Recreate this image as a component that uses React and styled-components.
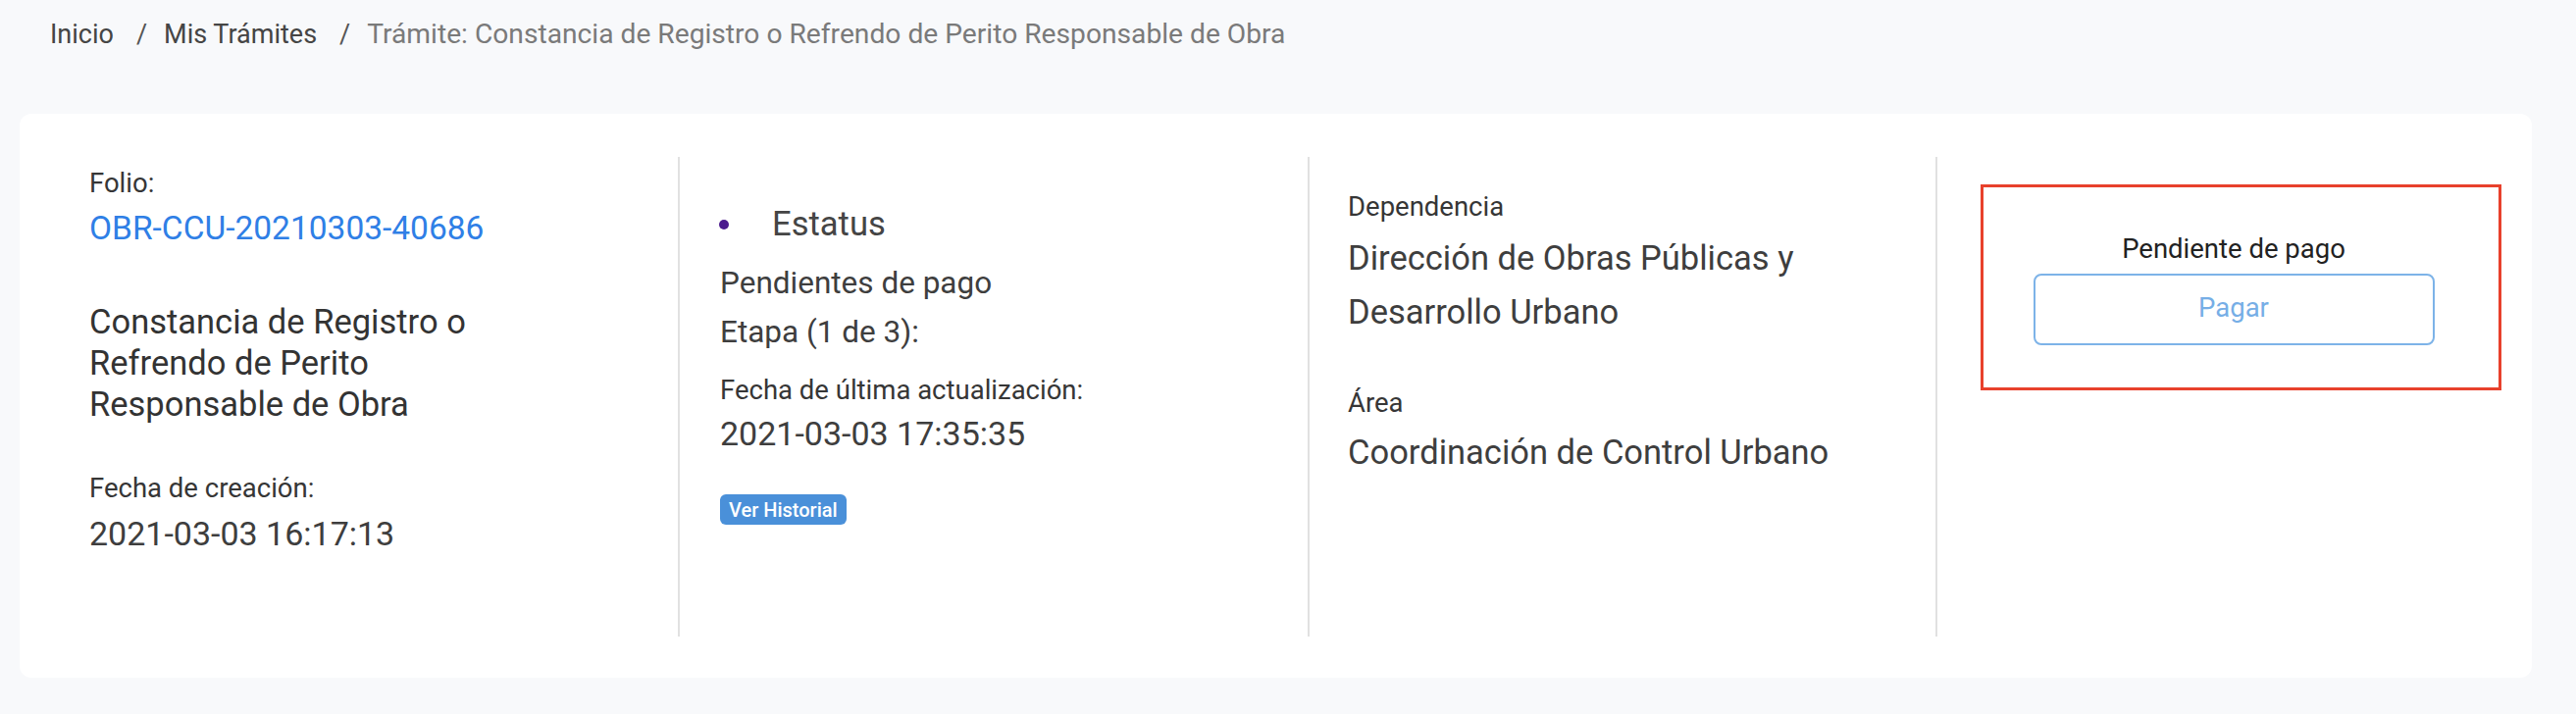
import React from "react";
import styled, { createGlobalStyle } from "styled-components";

const GlobalStyle = createGlobalStyle`
  html, body {
    margin: 0;
    padding: 0;
    background: #f8f9fb;
    font-family: Roboto, "Liberation Sans", sans-serif;
    color: #3c3c3c;
  }
  * { box-sizing: border-box; }
`;

const Page = styled.div`
  width: 2626px;
  min-height: 728px;
  background: #f8f9fb;
`;

const Breadcrumb = styled.nav`
  display: flex;
  align-items: baseline;
  padding: 18px 0 0 51px;
  font-size: 27px;
  line-height: 34px;
  white-space: nowrap;
`;

const Crumb = styled.span`
  color: ${(p) => (p.$current ? "#7a7a7a" : "#454545")};
  font-size: ${(p) => (p.$current ? "28.2px" : "27px")};
`;

const Sep = styled.span`
  color: #555;
  margin: 0 17px 0 23px;
`;

const Card = styled.section`
  margin: 64px 45px 0 20px;
  background: #ffffff;
  border-radius: 12px;
  padding: 44px 30px 42px 30px;
`;

const Grid = styled.div`
  display: grid;
  grid-template-columns: 641px 642px 640px 1fr;
  height: 489px;
`;

const Column = styled.div`
  display: flex;
  flex-direction: column;
  align-items: flex-start;
  padding-top: ${(p) => p.$pt}px;
  padding-left: ${(p) => p.$pl}px;
  border-left: ${(p) => (p.$divider ? "2px solid #e1e1e1" : "none")};
`;

const Label = styled.div`
  font-size: 27.5px;
  line-height: 34px;
  color: ${(p) => p.$color || "#363636"};
  margin-top: ${(p) => p.$mt || 0}px;
`;

const FolioLink = styled.a`
  display: block;
  font-size: 33.5px;
  line-height: 42px;
  color: #2f7fe6;
  text-decoration: none;
  margin-top: 8px;
`;

const Title = styled.h2`
  margin: 53px 0 0 0;
  max-width: 450px;
  font-weight: 400;
  font-size: 34.5px;
  line-height: 42px;
  color: #333;
`;

const BigValue = styled.div`
  font-size: ${(p) => p.$size || 34}px;
  line-height: ${(p) => p.$lh || 42}px;
  color: #3e3e3e;
  margin-top: ${(p) => p.$mt || 0}px;
  max-width: ${(p) => p.$maxw || "none"};
`;

const StatusRow = styled.div`
  display: flex;
  align-items: center;
  height: 42px;
`;

const Dot = styled.span`
  width: 10px;
  height: 10px;
  border-radius: 50%;
  background: #4b1b8e;
  margin: 2px 44px 0 -1px;
`;

const StatusTitle = styled.span`
  font-size: 34.6px;
  line-height: 42px;
  color: #454545;
`;

const Badge = styled.span`
  display: inline-flex;
  align-items: center;
  justify-content: center;
  height: 31px;
  padding: 0 9px;
  margin-top: 41px;
  background: #4a90d9;
  border-radius: 6px;
  color: #ffffff;
  font-size: 20px;
  font-weight: 500;
  line-height: 1;
`;

const PayBox = styled.div`
  width: 531px;
  height: 210px;
  border: 3px solid #e8412c;
  display: flex;
  flex-direction: column;
  align-items: center;
  padding: 46px 15px 0 0;
`;

const PayButton = styled.button`
  width: 409px;
  height: 73px;
  margin-top: 8px;
  border: 2px solid #7db3e8;
  border-radius: 8px;
  background: #ffffff;
  color: #76aee6;
  font-family: inherit;
  font-size: 27.5px;
  padding: 0 0 5px 0;
  cursor: pointer;
`;

export default function App() {
  return (
    <Page>
      <GlobalStyle />
      <Breadcrumb>
        <Crumb>Inicio</Crumb>
        <Sep>/</Sep>
        <Crumb>Mis Trámites</Crumb>
        <Sep>/</Sep>
        <Crumb $current>
          Trámite: Constancia de Registro o Refrendo de Perito Responsable de Obra
        </Crumb>
      </Breadcrumb>

      <Card>
        <Grid>
          <Column $pt={10} $pl={41}>
            <Label>Folio:</Label>
            <FolioLink href="#">OBR-CCU-20210303-40686</FolioLink>
            <Title>Constancia de Registro o Refrendo de Perito Responsable de Obra</Title>
            <Label $mt={48}>Fecha de creación:</Label>
            <BigValue $mt={8}>2021-03-03 16:17:13</BigValue>
          </Column>

          <Column $pt={47} $pl={41} $divider>
            <StatusRow>
              <Dot />
              <StatusTitle>Estatus</StatusTitle>
            </StatusRow>
            <BigValue $size={31.5} $lh={40} $mt={20}>Pendientes de pago</BigValue>
            <BigValue $size={31.5} $lh={40} $mt={10}>Etapa (1 de 3):</BigValue>
            <Label $mt={22}>Fecha de última actualización:</Label>
            <BigValue $mt={6}>2021-03-03 17:35:35</BigValue>
            <Badge>Ver Historial</Badge>
          </Column>

          <Column $pt={34} $pl={39} $divider>
            <Label>Dependencia</Label>
            <BigValue $size={34.5} $lh={55} $mt={8} $maxw="570px">
              Dirección de Obras Públicas y Desarrollo Urbano
            </BigValue>
            <Label $mt={48}>Área</Label>
            <BigValue $size={34.5} $lh={55} $mt={6}>Coordinación de Control Urbano</BigValue>
          </Column>

          <Column $pt={28} $pl={44} $divider>
            <PayBox>
              <Label $color="#222">Pendiente de pago</Label>
              <PayButton type="button">Pagar</PayButton>
            </PayBox>
          </Column>
        </Grid>
      </Card>
    </Page>
  );
}
